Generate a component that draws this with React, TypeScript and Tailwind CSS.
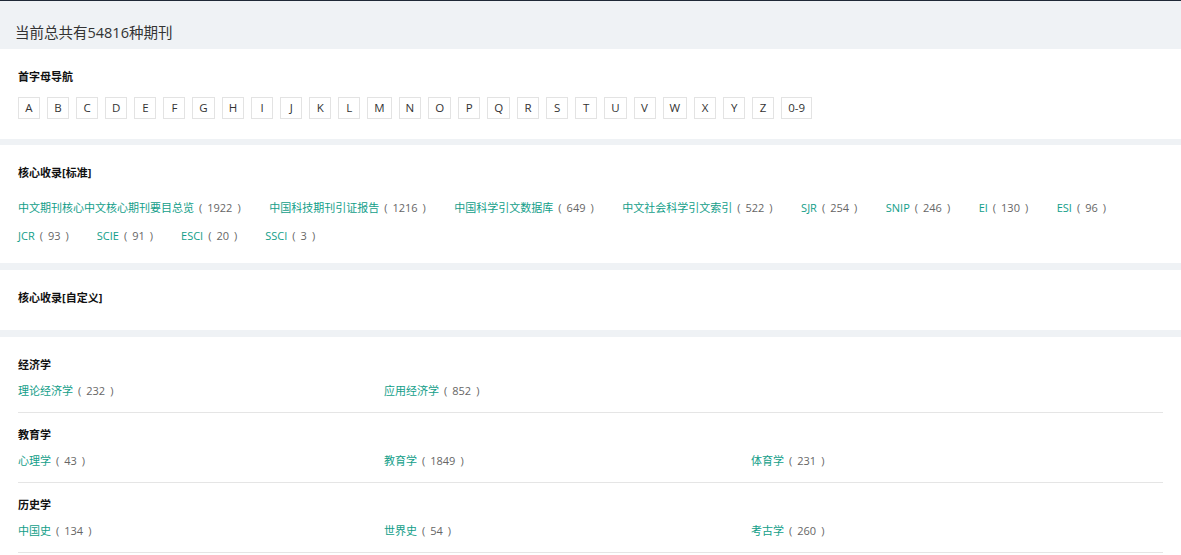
import React from "react";

const letters = ["A","B","C","D","E","F","G","H","I","J","K","L","M","N","O","P","Q","R","S","T","U","V","W","X","Y","Z","0-9"];

const row1: [string, number][] = [
  ["中文期刊核心中文核心期刊要目总览", 1922],
  ["中国科技期刊引证报告", 1216],
  ["中国科学引文数据库", 649],
  ["中文社会科学引文索引", 522],
  ["SJR", 254],
  ["SNIP", 246],
  ["EI", 130],
  ["ESI", 96],
];
const row2: [string, number][] = [
  ["JCR", 93],
  ["SCIE", 91],
  ["ESCI", 20],
  ["SSCI", 3],
];

const subjects: { title: string; items: [string, number][] }[] = [
  { title: "经济学", items: [["理论经济学", 232], ["应用经济学", 852]] },
  { title: "教育学", items: [["心理学", 43], ["教育学", 1849], ["体育学", 231]] },
  { title: "历史学", items: [["中国史", 134], ["世界史", 54], ["考古学", 260]] },
];

function Link({ name, count }: { name: string; count: number }) {
  return (
    <span className="whitespace-nowrap cursor-pointer">
      <span className="text-[#129e89]">{name}</span>
      <span className="text-[#666]">
        <span className="ml-[5px]">(</span>
        <span className="mx-[5px]">{count}</span>
        <span>)</span>
      </span>
    </span>
  );
}

export default function App() {
  return (
    <div
      className="w-[1181px] min-h-[555px] bg-[#eff2f5] border-t border-[#1f2937] text-[11px]"
      style={{ fontFamily: '"Open Sans", "Noto Sans CJK SC", sans-serif' }}
    >
      <div className="h-[48px] px-[15px] pt-[22px] text-[14.5px] leading-[20px] text-[#333]">
        当前总共有54816种期刊
      </div>

      <div className="bg-white px-[18px] pt-[19px] pb-[20px]">
        <div className="font-bold leading-[18px] text-[#111]">首字母导航</div>
        <div className="mt-[11px] flex gap-[7px]">
          {letters.map((l) => (
            <div
              key={l}
              className="h-[22px] min-w-[22px] px-[6px] border border-[#e3e3e3] flex items-center justify-center text-[11.5px] text-[#333] leading-none cursor-pointer"
            >
              {l}
            </div>
          ))}
        </div>
      </div>

      <div className="mt-[6px] bg-white px-[18px] pt-[19px] pb-[13px]">
        <div className="font-bold leading-[18px] text-[#111]">核心收录[标准]</div>
        <div className="mt-[12px]">
          <div className="flex gap-[28.5px] leading-[28px]">
            {row1.map(([n, c]) => (
              <Link key={n} name={n} count={c} />
            ))}
          </div>
          <div className="flex gap-[28px] leading-[28px]">
            {row2.map(([n, c]) => (
              <Link key={n} name={n} count={c} />
            ))}
          </div>
        </div>
      </div>

      <div className="mt-[7px] bg-white px-[18px] pt-[19px] pb-[23px]">
        <div className="font-bold leading-[18px] text-[#111]">核心收录[自定义]</div>
      </div>

      <div className="mt-[7px] bg-white px-[18px] pb-[2px]">
        {subjects.map((s) => (
          <div key={s.title} className="pt-[13px] pb-[12px] border-b border-[#e5e5e5] first:pt-[19px]">
            <div className="font-bold leading-[18px] text-[#111]">{s.title}</div>
            <div className="mt-[8px] grid grid-cols-[366px_367px_1fr] leading-[18px]">
              {s.items.map(([n, c]) => (
                <div key={n}>
                  <Link name={n} count={c} />
                </div>
              ))}
            </div>
          </div>
        ))}
      </div>
    </div>
  );
}
